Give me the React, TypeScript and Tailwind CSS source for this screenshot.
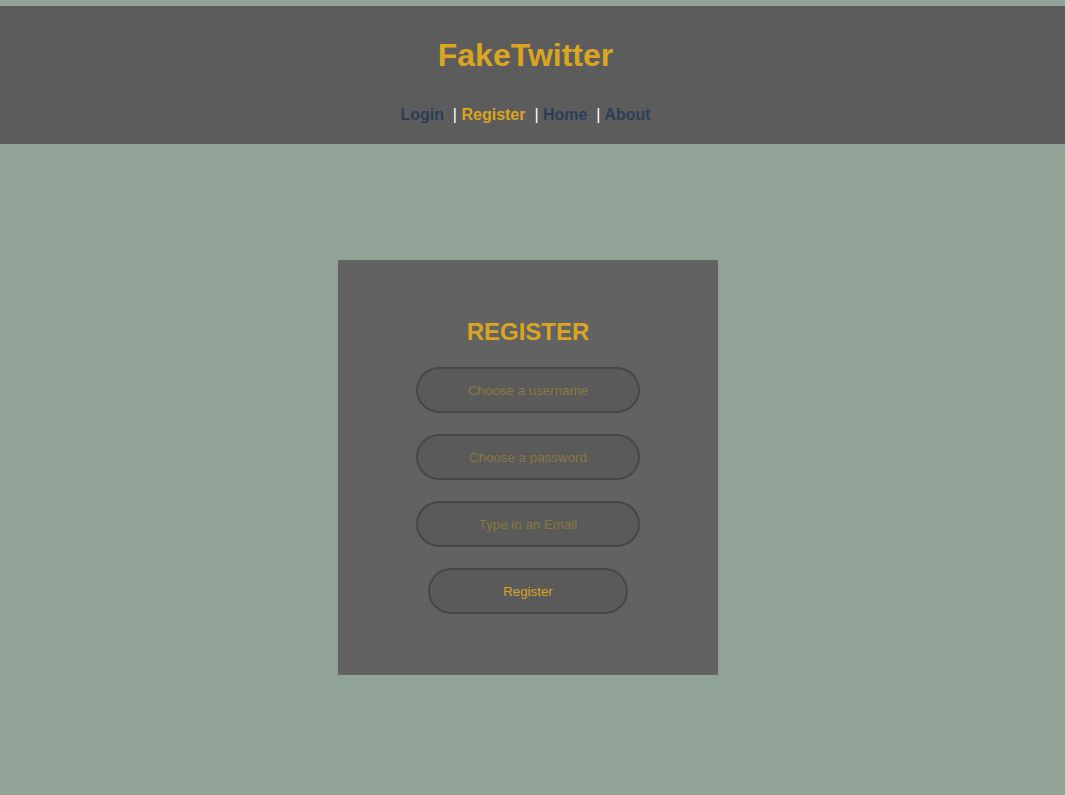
import React from 'react';

function NavBar() {
  return (
    <nav className="mt-[33px] text-[16px] leading-[18px] font-bold whitespace-pre">
      <a className="text-[#2c3e56]">Login</a>
      <span className="text-white">{'  '}<span className="font-normal">|</span>{' '}</span>
      <a className="text-[#daa520]">Register</a>
      <span className="text-white">{'  '}<span className="font-normal">|</span>{' '}</span>
      <a className="text-[#2c3e56]">Home</a>
      <span className="text-white">{'  '}<span className="font-normal">|</span>{' '}</span>
      <a className="text-[#2c3e56]">About</a>
    </nav>
  );
}

function Field({placeholder, type = 'text'}: {placeholder: string; type?: string}) {
  return (
    <input
      type={type}
      placeholder={placeholder}
      className="w-[224px] h-[46px] rounded-full border-2 border-[#474747] bg-[#5a5a5a] text-center text-[13.33px] text-[#daa520] placeholder:text-[#8a7841] outline-none"
    />
  );
}

export default function App() {
  return (
    <div className="min-h-screen bg-[#91a397] pt-[6px] font-['Liberation_Sans',Arial,sans-serif]">
      {/* Header */}
      <header className="h-[138px] bg-[#5c5c5c] flex flex-col items-center pt-[31px] pr-[14px]">
        <h1 className="text-[32px] leading-[36px] font-bold text-[#daa520]">FakeTwitter</h1>
        <NavBar />
      </header>

      {/* Register card */}
      <main className="flex justify-center pt-[116px] pr-[9px]">
        <form className="w-[380px] bg-[#626262] flex flex-col items-center pt-[58px] pb-[61px]">
          <h2 className="text-[24px] leading-[28px] font-bold text-[#daa520]">REGISTER</h2>
          <div className="mt-[21px] flex flex-col items-center gap-[21px]">
            <Field placeholder="Choose a username" />
            <Field placeholder="Choose a password" type="password" />
            <Field placeholder="Type in an Email" type="email" />
            <button
              type="button"
              className="w-[200px] h-[46px] rounded-full border-2 border-[#474747] bg-[#5a5a5a] pt-px text-[13.33px] text-[#daa520]"
            >
              Register
            </button>
          </div>
        </form>
      </main>
    </div>
  );
}
